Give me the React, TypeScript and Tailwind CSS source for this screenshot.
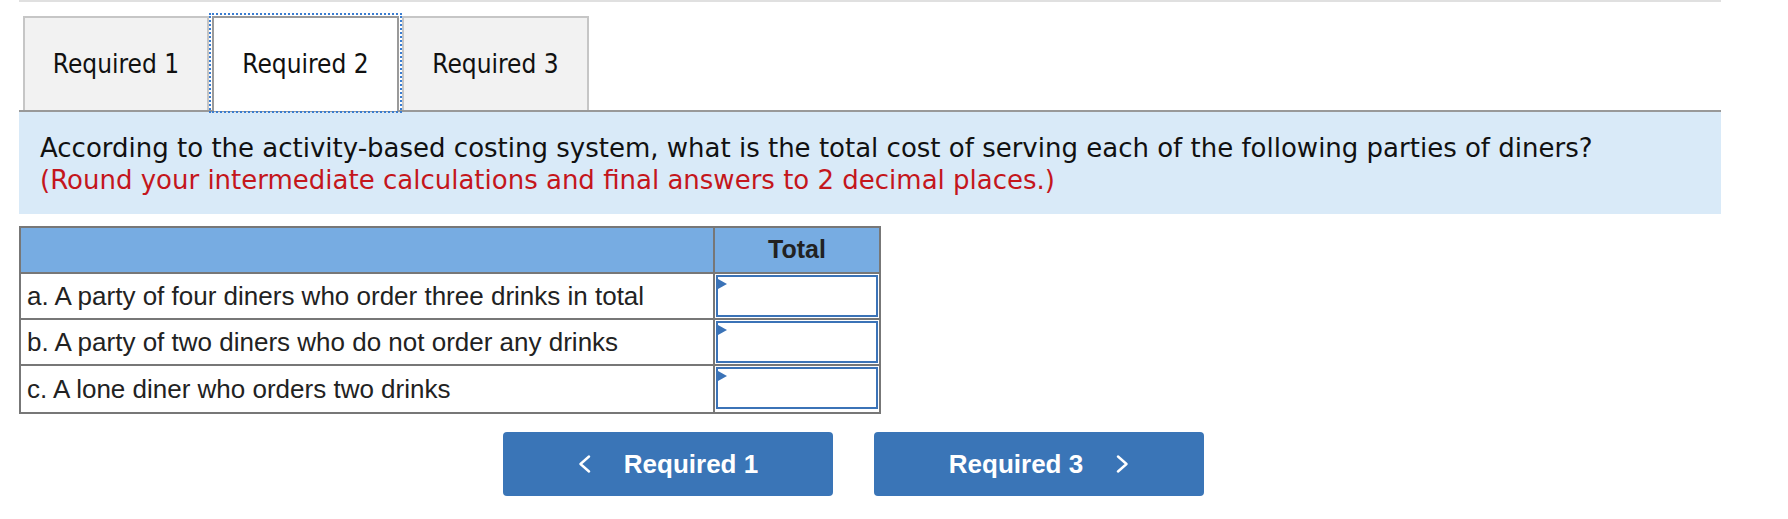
import React from "react";

const tabFont = "font-['DejaVu_Sans_Condensed','DejaVu_Sans',sans-serif]";
const questionFont = "font-['DejaVu_Sans',Verdana,sans-serif]";
const tableFont = "font-['Liberation_Sans',Arial,sans-serif]";

function Chevron({ dir }: { dir: "left" | "right" }) {
  return (
    <svg width="13" height="18" viewBox="0 0 13 18" fill="none" stroke="white" strokeWidth="2.4" strokeLinecap="round" strokeLinejoin="round">
      {dir === "left" ? <polyline points="11,1.5 2.5,9 11,16.5" /> : <polyline points="2,1.5 10.5,9 2,16.5" />}
    </svg>
  );
}

function AnswerCell() {
  return (
    <div className="relative m-[1px] h-[42px] border-2 border-[#3b73b7] bg-white">
      <svg className="absolute left-0 top-[2px]" width="9" height="10" viewBox="0 0 9 10">
        <polygon points="0,0 9,5 0,10" fill="#3b73b7" />
      </svg>
    </div>
  );
}

const rows = [
  "a. A party of four diners who order three drinks in total",
  "b. A party of two diners who do not order any drinks",
  "c. A lone diner who orders two drinks",
];

export default function App() {
  return (
    <div className="w-[1788px] h-[519px] bg-white overflow-hidden">
      <div className="ml-[19px] w-[1702px]">
        <div className="h-[2px] bg-[#e0e0e0]" />

        {/* tabs */}
        <div className={`flex items-start h-[110px] pt-[11px] pl-[4px] border-b-2 border-[#999] ${tabFont} text-[26px] text-[#111]`}>
          <div className="mt-[3px] h-[94px] w-[186px] border-2 border-b-0 border-[#c6c6c6] bg-[#f2f2f2] flex items-center justify-center">
            Required 1
          </div>
          <div className="relative z-10 h-[100px] w-[193px] border-2 border-dotted border-[#3b7dd0] p-[1px] pb-0">
            <div className="h-full border-2 border-b-0 border-[#9a9a9a] bg-white flex items-center justify-center">
              Required 2
            </div>
          </div>
          <div className="mt-[3px] h-[94px] w-[187px] border-2 border-b-0 border-[#c6c6c6] bg-[#f2f2f2] flex items-center justify-center">
            Required 3
          </div>
        </div>

        {/* question */}
        <div className={`bg-[#d9eaf8] pl-[21px] pt-[20px] pb-[18px] ${questionFont} text-[26px] leading-[32px]`}>
          <div className="text-[#111]">
            According to the activity-based costing system, what is the total cost of serving each of the following parties of diners?
          </div>
          <div className="text-[#c4161c]">(Round your intermediate calculations and final answers to 2 decimal places.)</div>
        </div>

        {/* table */}
        <div className={`mt-[12px] w-[862px] border-2 border-[#777] ${tableFont} text-[26px] text-[#222]`}>
          <div className="flex h-[46px] border-b-2 border-[#777] bg-[#77ace2]">
            <div className="w-[694px] border-r-2 border-[#777]" />
            <div className="flex-1 flex items-center justify-center font-bold text-[25px]">Total</div>
          </div>
          {rows.map((r, i) => (
            <div key={i} className={`flex h-[46px] ${i < rows.length - 1 ? "border-b-2 border-[#777]" : ""}`}>
              <div className="w-[694px] border-r-2 border-[#777] pl-[6px] flex items-center">{r}</div>
              <div className="flex-1">
                <AnswerCell />
              </div>
            </div>
          ))}
        </div>

        {/* nav buttons */}
        <div className={`mt-[18px] ml-[484px] flex gap-[41px] ${tableFont} text-[26px] font-bold text-white`}>
          <button className="w-[330px] h-[64px] rounded-[4px] bg-[#3a75b7] flex items-center justify-center gap-[33px]">
            <Chevron dir="left" />
            <span>Required 1</span>
          </button>
          <button className="w-[330px] h-[64px] rounded-[4px] bg-[#3a75b7] flex items-center justify-center gap-[33px]">
            <span>Required 3</span>
            <Chevron dir="right" />
          </button>
        </div>
      </div>
    </div>
  );
}
